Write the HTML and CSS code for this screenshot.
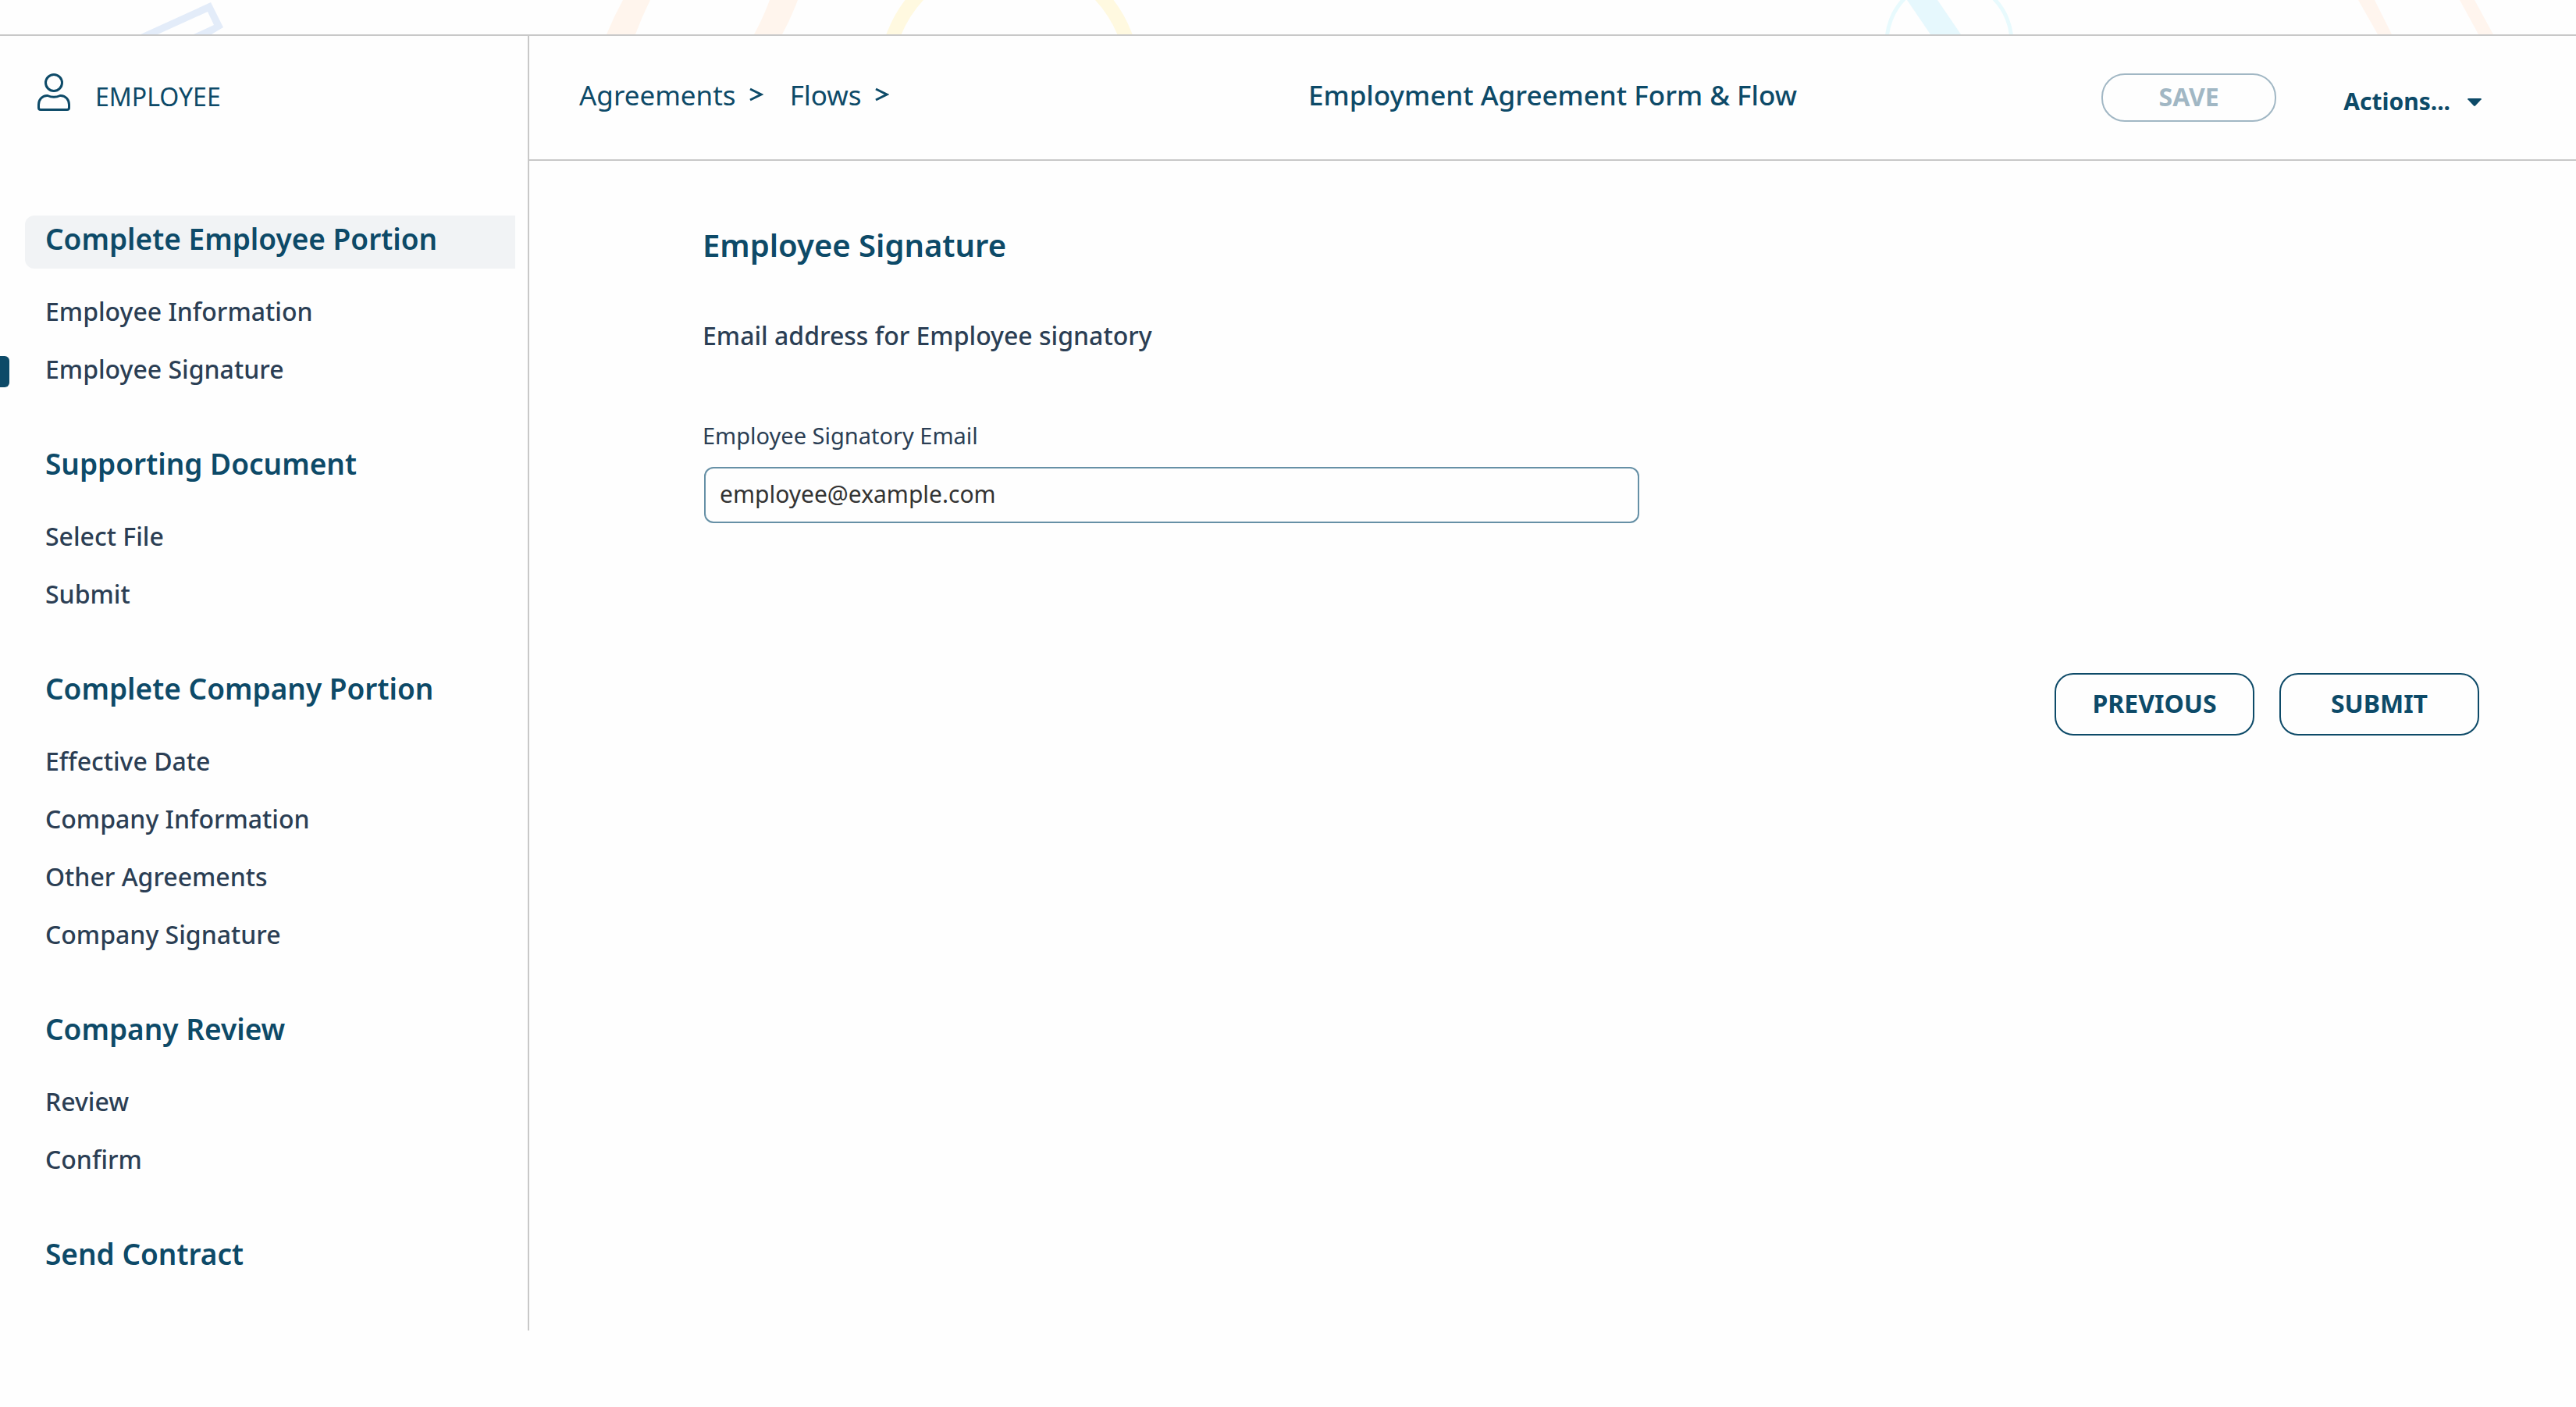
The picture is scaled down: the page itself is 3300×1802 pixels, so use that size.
FILE: index.html
```html
<!DOCTYPE html>
<html lang="en">
<head>
<meta charset="utf-8">
<title>Employment Agreement Form &amp; Flow</title>
<link rel="stylesheet" href="styles.css">
</head>
<body>
<div class="banner">
  <svg class="banner-art" viewBox="0 0 3300 44" preserveAspectRatio="xMinYMin slice" aria-hidden="true">
    <path fill="#e3ecf9" fill-rule="evenodd" d="M180 44 270 3 286 35 271 44H248L274 32 266 15 202 44Z"/>
    <path fill="#fff5ed" d="M798 0H833Q822 22 814 44H777Q786 22 798 0ZM986 0H1022Q1013 24 1002 44H966Q978 22 986 0Z"/>
    <circle cx="1293" cy="102" r="159" fill="none" stroke="#fff9e0" stroke-width="18"/>
    <circle cx="2497" cy="54" r="80" fill="none" stroke="#e8fafd" stroke-width="5"/>
    <path fill="#e6f8fd" d="M2443 0H2482L2512 44H2473Z"/>
    <path fill="#fff5ee" d="M3021 0H3042L3064 44H3046ZM3151 0H3170L3194 44H3175Z"/>
  </svg>
</div>
<div class="app">
  <aside class="sidebar">
    <div class="role">
      <svg class="role-icon" viewBox="0 0 42 48" aria-hidden="true">
        <circle cx="21" cy="12" r="10.5"/>
        <path d="M13 28.5Q21 32 29 28.5C36 28 40.500 34 40.500 40V44Q40.500 46.500 38 46.500H4Q1.500 46.500 1.500 44V40C1.500 34 6 28 13 28.500Z"/>
      </svg>
      <span class="role-name">EMPLOYEE</span>
    </div>
    <nav class="steps">
      <section class="step">
        <h2 class="step-title is-active">Complete Employee Portion</h2>
        <ul class="step-items">
          <li><a href="#">Employee Information</a></li>
          <li class="is-current"><a href="#" aria-current="step">Employee Signature</a></li>
        </ul>
      </section>
      <section class="step">
        <h2 class="step-title">Supporting Document</h2>
        <ul class="step-items">
          <li><a href="#">Select File</a></li>
          <li><a href="#">Submit</a></li>
        </ul>
      </section>
      <section class="step">
        <h2 class="step-title">Complete Company Portion</h2>
        <ul class="step-items">
          <li><a href="#">Effective Date</a></li>
          <li><a href="#">Company Information</a></li>
          <li><a href="#">Other Agreements</a></li>
          <li><a href="#">Company Signature</a></li>
        </ul>
      </section>
      <section class="step">
        <h2 class="step-title">Company Review</h2>
        <ul class="step-items">
          <li><a href="#">Review</a></li>
          <li><a href="#">Confirm</a></li>
        </ul>
      </section>
      <section class="step">
        <h2 class="step-title">Send Contract</h2>
      </section>
    </nav>
  </aside>
  <div class="main">
    <header class="topbar">
      <nav class="crumbs" aria-label="Breadcrumb">
        <span class="crumb"><a href="#">Agreements</a><svg class="chevron" viewBox="0 0 18 18" aria-hidden="true"><path d="M1 2 15 9 1 16"/></svg></span>
        <span class="crumb"><a href="#">Flows</a><svg class="chevron" viewBox="0 0 18 18" aria-hidden="true"><path d="M1 2 15 9 1 16"/></svg></span>
      </nav>
      <h1 class="page-title">Employment Agreement Form &amp; Flow</h1>
      <div class="tools">
        <button class="btn btn-save" type="button" disabled>SAVE</button>
        <button class="actions" type="button">Actions...<svg class="caret" viewBox="0 0 18 10" aria-hidden="true"><path d="M1 0H17Q19 1 17 2L10 9.500Q9 10.300 8 9.500L1 2Q-1 1 1 0Z"/></svg></button>
      </div>
    </header>
    <form class="form">
      <h2 class="form-title">Employee Signature</h2>
      <p class="form-note">Email address for Employee signatory</p>
      <label class="form-label" for="email">Employee Signatory Email</label>
      <input class="form-input" id="email" type="email" value="employee@example.com">
      <div class="form-buttons">
        <button class="btn btn-step" type="button">PREVIOUS</button>
        <button class="btn btn-step" type="submit">SUBMIT</button>
      </div>
    </form>
  </div>
</div>
</body>
</html>
```
FILE: styles.css
```css
:root {
  --brand: #0d4a68;
  --text: #2b3e54;
  --line: #c8c8c8;
  --page: #fefefe;
}

* {
  box-sizing: border-box;
}

body {
  margin: 0;
  background: var(--page);
  color: var(--text);
  font-family: "Noto Sans", "Open Sans", sans-serif;
  font-size: 32px;
}

h1, h2, p, ul {
  margin: 0;
  padding: 0;
}

a {
  color: inherit;
  text-decoration: none;
}

button, input {
  font-family: inherit;
}

.banner {
  height: 46px;
  border-bottom: 2px solid var(--line);
  overflow: hidden;
}

.banner-art {
  display: block;
  width: 100%;
  height: 44px;
}

.app {
  display: flex;
  align-items: flex-start;
}

/* Sidebar */

.sidebar {
  flex: 0 0 678px;
  padding-bottom: 60px;
  border-right: 2px solid var(--line);
}

.role {
  display: flex;
  align-items: center;
  gap: 32px;
  padding: 48px 48px 134px;
  color: var(--brand);
}

.role-icon {
  width: 42px;
  height: 48px;
  fill: none;
  stroke: currentColor;
  stroke-width: 3;
}

.role-name {
  height: 48px;
  line-height: 60px;
}

.steps {
  display: flex;
  flex-direction: column;
  gap: 54px;
}

.step {
  display: flex;
  flex-direction: column;
  gap: 18px;
}

.step-title {
  margin: 0 16px 0 32px;
  padding: 0 0 8px 26px;
  border-radius: 12px 0 0 12px;
  color: var(--brand);
  font-size: 37px;
  font-weight: 600;
  line-height: 60px;
}

.step-title.is-active {
  background: #f1f3f5;
}

.step-items {
  list-style: none;
}

.step-items li {
  position: relative;
  padding-left: 58px;
  font-weight: 500;
  line-height: 74px;
}

.step-items .is-current::before {
  content: "";
  position: absolute;
  left: 0;
  top: 20px;
  width: 12px;
  height: 40px;
  border-radius: 0 6px 6px 0;
  background: var(--brand);
}

/* Main column */

.main {
  flex: 1;
  min-width: 0;
}

.topbar {
  display: grid;
  grid-template-columns: 1fr auto 1fr;
  align-items: center;
  height: 160px;
  padding: 0 64px;
  border-bottom: 2px solid var(--line);
  color: var(--brand);
  font-size: 35px;
}

.crumbs {
  display: flex;
  gap: 34px;
  padding-bottom: 8px;
}

.crumb {
  display: flex;
  align-items: center;
  gap: 17px;
}

.chevron {
  width: 18px;
  height: 18px;
  fill: none;
  stroke: currentColor;
  stroke-width: 3;
}

.page-title {
  padding-bottom: 8px;
  font-size: 35px;
  font-weight: 500;
}

.tools {
  display: flex;
  justify-content: flex-end;
  align-items: center;
  gap: 86px;
  padding-right: 57px;
}

.btn {
  border: 2px solid var(--brand);
  background: transparent;
  color: var(--brand);
  font-size: 32px;
  font-weight: 700;
}

.btn-save {
  width: 224px;
  height: 62px;
  padding: 0 0 4px;
  border-color: #a1b7c4;
  border-radius: 30px;
  color: #a1b7c4;
}

.actions {
  display: flex;
  align-items: center;
  gap: 22px;
  padding: 8px 0 0;
  border: 0;
  background: none;
  color: var(--brand);
  font-size: 30px;
  font-weight: 700;
}

.caret {
  width: 18px;
  height: 10px;
  margin-top: 4px;
  fill: currentColor;
}

.form {
  display: flex;
  flex-direction: column;
  align-items: flex-start;
  padding: 78px 124px 0 222px;
}

.form-title {
  color: var(--brand);
  font-size: 40px;
  font-weight: 600;
  line-height: 60px;
}

.form-note {
  margin-top: 56px;
  font-weight: 500;
  line-height: 60px;
}

.form-label {
  margin-top: 68px;
  font-size: 29px;
  line-height: 60px;
}

.form-input {
  width: 1198px;
  max-width: 100%;
  height: 72px;
  margin: 10px 2px 0;
  padding: 0 18px 4px;
  border: 2px solid #6690a6;
  border-radius: 12px;
  background: transparent;
  color: #333;
  font-size: 30px;
}

.form-buttons {
  display: flex;
  gap: 32px;
  align-self: flex-end;
  margin-top: 192px;
}

.btn-step {
  width: 256px;
  height: 80px;
  padding: 0 0 4px;
  border-radius: 24px;
}
```
